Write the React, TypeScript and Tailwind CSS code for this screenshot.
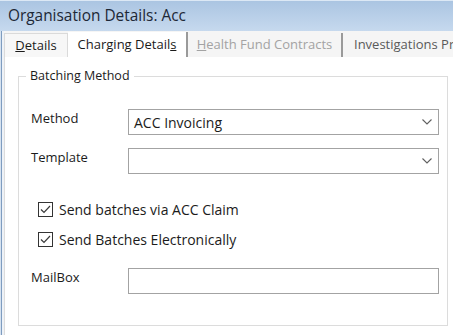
import React from "react";

const font = "font-['Segoe_UI','Open_Sans','Liberation_Sans',sans-serif]";

const Chevron = () => (
  <svg width="10" height="6" viewBox="0 0 10 6" className="shrink-0">
    <path d="M0.5 0.5 L5 5 L9.5 0.5" fill="none" stroke="#5f5f5f" strokeWidth="1.1" />
  </svg>
);

const Check = () => (
  <span className="flex h-[15px] w-[15px] shrink-0 items-center justify-center border border-[#333333] bg-white">
    <svg width="11" height="9" viewBox="0 0 11 9">
      <path d="M1 4.5 L4 7.5 L10 1" fill="none" stroke="#3a3a3a" strokeWidth="1.2" />
    </svg>
  </span>
);

const Combo = ({ value }: { value?: string }) => (
  <div className="flex h-[26px] w-[311px] items-center justify-between border border-[#a3a3a3] bg-white pl-[5px] pr-[6px] text-[14px] text-[#1b1b1b]">
    <span>{value}</span>
    <Chevron />
  </div>
);

const App = () => {
  return (
    <div className={`flex h-[335px] w-[453px] flex-col overflow-hidden bg-white ${font}`}>
      {/* title */}
      <div className="flex h-[31px] shrink-0 items-center border-t border-[#dce8f5] bg-gradient-to-b from-[#abc5e2] to-[#c6d9ee] pl-[8px] text-[15.4px] text-[#1d2836]">
        Organisation Details: Acc
      </div>

      <div className="flex flex-1">
        {/* window frame */}
        <div className="flex w-[4px] shrink-0">
          <div className="w-[1px] bg-[#d6e2ef]" />
          <div className="w-[1px] bg-[#7e9cc0]" />
          <div className="w-[2px] bg-[#eef2f7]" />
        </div>

        <div className="flex min-w-0 flex-1 flex-col">
          {/* tabs */}
          <div className="flex h-[26px] shrink-0 items-end overflow-hidden bg-[#f5f5f5] text-[13px]">
            <div className="flex h-[24px] w-[64px] shrink-0 items-center justify-center border border-b-0 border-[#dadada] bg-[#f7f7f7] text-[#1b1b1b]">
              <span><span className="underline">D</span>etails</span>
            </div>
            <div className="flex h-[25px] w-[120px] shrink-0 items-center justify-center border-r-2 border-[#9a9a9a] bg-white text-[#1b1b1b]">
              <span>Charging Detail<span className="underline">s</span></span>
            </div>
            <div className="flex h-[24px] w-[155px] shrink-0 items-center justify-center border-r-2 border-[#9a9a9a] text-[#a3a3a3]">
              <span><span className="underline">H</span>ealth Fund Contracts</span>
            </div>
            <div className="flex h-[24px] shrink-0 items-center whitespace-nowrap pl-[11px] text-[#5a5a5a]">
              <span>Investi<span className="underline">g</span>ations Processing</span>
            </div>
          </div>

          {/* page */}
          <div className="flex-1 border-l border-[#dcdcdc] pl-[13px] pt-[11px]">
            <fieldset className="h-[258px] w-[430px] border border-[#dcdcdc] pl-[12px] pr-[8px]">
              <legend className="ml-[-5px] px-[4px] text-[12.5px] leading-[16px] text-[#1b1b1b]">Batching Method</legend>

              <div className="mt-[25px] flex items-start">
                <span className="w-[97px] pt-[1px] text-[13px] leading-[16px] text-[#1b1b1b]">Method</span>
                <Combo value="ACC Invoicing" />
              </div>
              <div className="mt-[13px] flex items-start">
                <span className="w-[97px] pt-[1px] text-[13px] leading-[16px] text-[#1b1b1b]">Template</span>
                <Combo />
              </div>

              <div className="mt-[28px] flex flex-col gap-[15px] pl-[7px] text-[14px] text-[#1b1b1b]">
                <label className="flex h-[15px] items-center gap-[6px]">
                  <Check />
                  <span>Send batches via ACC Claim</span>
                </label>
                <label className="flex h-[15px] items-center gap-[6px]">
                  <Check />
                  <span>Send Batches Electronically</span>
                </label>
              </div>

              <div className="mt-[21px] flex items-start">
                <span className="w-[97px] pt-[1px] text-[13px] leading-[16px] text-[#1b1b1b]">MailBox</span>
                <div className="h-[26px] w-[311px] border border-[#a3a3a3] bg-white" />
              </div>
            </fieldset>
          </div>
        </div>
      </div>
    </div>
  );
};

export default App;
